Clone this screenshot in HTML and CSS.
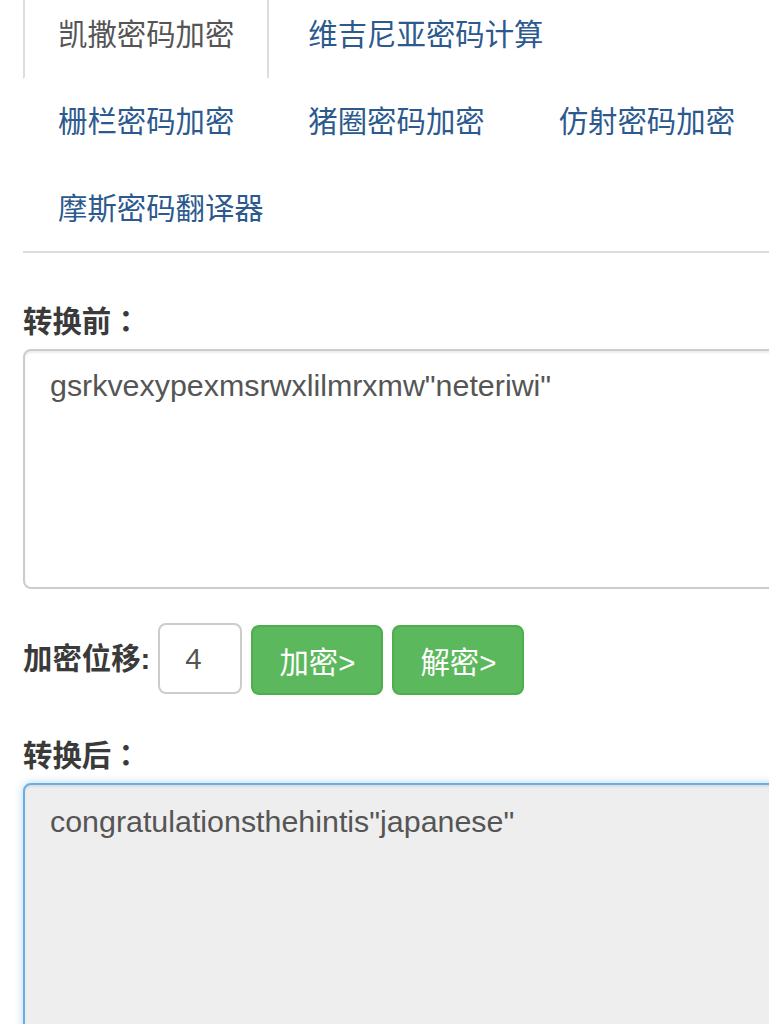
FILE: index.html
```html
<!DOCTYPE html>
<html lang="zh-CN">
<head>
    <meta charset="UTF-8">
    <title>凯撒密码加密</title>
    <link rel="stylesheet" href="styles.css">
</head>
<body>

    <div class="page">
        <ul class="tabs">
            <li class="active"><a href="#">凯撒密码加密</a></li>
            <li><a href="#">维吉尼亚密码计算</a></li>
            <li><a href="#">栅栏密码加密</a></li>
            <li><a href="#">猪圈密码加密</a></li>
            <li><a href="#">仿射密码加密</a></li>
            <li><a href="#">摩斯密码翻译器</a></li>
        </ul>

        <form id="caesar-form">
            <h4 class="label">转换前<span lang="zh-TW">：</span></h4>
            <textarea id="before" class="box">gsrkvexypexmsrwxlilmrxmw"neteriwi"</textarea>

            <div class="shift-row">
                <span class="shift-label">加密位移:</span>
                <input type="text" id="shift" class="shift-input" value="4">
                <button type="button" class="btn" id="enc">加密&gt;</button>
                <button type="button" class="btn" id="dec">解密&gt;</button>
            </div>

            <h4 class="label label-after">转换后<span lang="zh-TW">：</span></h4>
            <textarea id="after" class="box result" readonly>congratulationsthehintis"japanese"</textarea>
        </form>
    </div>

</body>
</html>
```

FILE: styles.css
```css
* {
    margin: 0;
    padding: 0;
    box-sizing: border-box;
}
html, body {
    overflow: hidden;
}
body {
    font-family: "Liberation Sans", "Noto Sans CJK SC", sans-serif;
    font-size: 29.4px;
    line-height: 42px;
    color: #333;
    background: #fff;
}
.page {
    width: 783px;
    padding-left: 23px;
}
.tabs {
    list-style: none;
    display: flex;
    flex-wrap: wrap;
    margin-top: -10px;
    border-bottom: 2px solid #ddd;
}
.tabs li {
    margin-right: 4px;
    margin-bottom: -2px;
}
.tabs a {
    display: block;
    padding: 21.5px 33px;
    color: #2c5a8e;
    text-decoration: none;
    border: 2px solid transparent;
    border-radius: 8px 8px 0 0;
}
.tabs li.active a {
    color: #555;
    background: #fff;
    border-color: #ddd #ddd transparent;
}
.label {
    height: 42px;
    font-size: 29.4px;
    font-weight: bold;
    color: #3a3a3a;
    margin-top: 45px;
    margin-bottom: 9px;
}
.label span {
    font-family: "Noto Sans CJK TC", sans-serif;
}
.label-after {
    margin-top: 37px;
}
.box {
    display: block;
    width: 760px;
    height: 240px;
    padding: 13px 25px;
    font-family: "Liberation Sans", "Noto Sans CJK SC", sans-serif;
    font-size: 30.4px;
    line-height: 42px;
    color: #555;
    background: #fff;
    border: 2px solid #ccc;
    border-radius: 8px;
    resize: none;
    outline: none;
    box-shadow: inset 0 2px 2px rgba(0, 0, 0, 0.075);
}
.box.result {
    height: 260px;
    padding-top: 15px;
    background: #eee;
    border-color: #66afe9;
    box-shadow: inset 0 2px 2px rgba(0, 0, 0, 0.075), 0 0 8px rgba(102, 175, 233, 0.5);
}
.shift-row {
    display: flex;
    align-items: center;
    margin-top: 33px;
    height: 73px;
}
.shift-label {
    font-weight: bold;
    color: #3a3a3a;
    margin-right: 8px;
}
.shift-input {
    width: 84px;
    height: 71px;
    padding: 0 25px;
    font-family: "Liberation Sans", sans-serif;
    font-size: 29.4px;
    color: #555;
    border: 2px solid #ccc;
    border-radius: 8px;
    outline: none;
    margin-right: 9px;
}
.btn {
    width: 132px;
    height: 70px;
    margin-right: 9px;
    margin-top: 3px;
    font-family: "Liberation Sans", "Noto Sans CJK SC", sans-serif;
    font-size: 29.4px;
    color: #fff;
    background-color: #5cb85c;
    border: 2px solid #4cae4c;
    border-radius: 8px;
    cursor: pointer;
}
```
